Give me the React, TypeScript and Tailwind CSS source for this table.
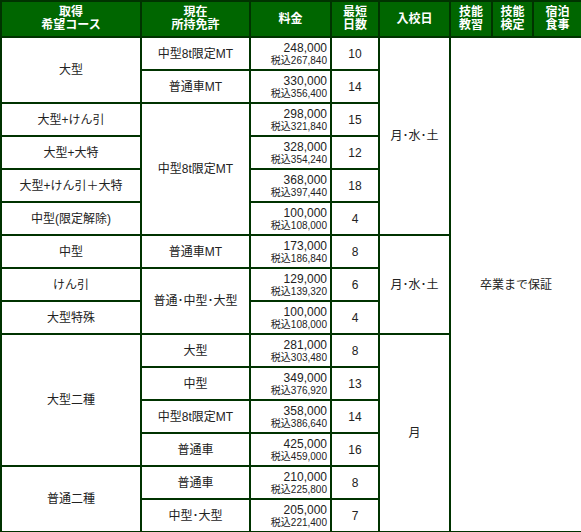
const font = { fontFamily: '"Liberation Sans", "Noto Sans CJK JP", sans-serif' };

type Row = {
  course?: { label: string; span: number };
  license?: { label: string; span: number };
  price: string;
  tax: string;
  days: string;
  entry?: { label: string; span: number };
};

const rows: Row[] = [
  { course: { label: "大型", span: 2 }, license: { label: "中型8t限定MT", span: 1 }, price: "248,000", tax: "267,840", days: "10", entry: { label: "月･水･土", span: 6 } },
  { license: { label: "普通車MT", span: 1 }, price: "330,000", tax: "356,400", days: "14" },
  { course: { label: "大型+けん引", span: 1 }, license: { label: "中型8t限定MT", span: 4 }, price: "298,000", tax: "321,840", days: "15" },
  { course: { label: "大型+大特", span: 1 }, price: "328,000", tax: "354,240", days: "12" },
  { course: { label: "大型+けん引＋大特", span: 1 }, price: "368,000", tax: "397,440", days: "18" },
  { course: { label: "中型(限定解除)", span: 1 }, price: "100,000", tax: "108,000", days: "4" },
  { course: { label: "中型", span: 1 }, license: { label: "普通車MT", span: 1 }, price: "173,000", tax: "186,840", days: "8", entry: { label: "月･水･土", span: 3 } },
  { course: { label: "けん引", span: 1 }, license: { label: "普通･中型･大型", span: 2 }, price: "129,000", tax: "139,320", days: "6" },
  { course: { label: "大型特殊", span: 1 }, price: "100,000", tax: "108,000", days: "4" },
  { course: { label: "大型二種", span: 4 }, license: { label: "大型", span: 1 }, price: "281,000", tax: "303,480", days: "8", entry: { label: "月", span: 6 } },
  { license: { label: "中型", span: 1 }, price: "349,000", tax: "376,920", days: "13" },
  { license: { label: "中型8t限定MT", span: 1 }, price: "358,000", tax: "386,640", days: "14" },
  { license: { label: "普通車", span: 1 }, price: "425,000", tax: "459,000", days: "16" },
  { course: { label: "普通二種", span: 2 }, license: { label: "普通車", span: 1 }, price: "210,000", tax: "225,800", days: "8" },
  { license: { label: "中型･大型", span: 1 }, price: "205,000", tax: "221,400", days: "7" },
];

const cell = "border-2 border-[#003300] text-center align-middle p-0";
const head = "border-2 border-[#003300] bg-[#006600] text-white font-bold text-[12px] leading-[13px] text-center align-middle p-0";

export default function App() {
  return (
    <div className="w-[581px] bg-white" style={font}>
      <table className="w-[581px] table-fixed border-collapse text-[12px] text-[#222]">
        <colgroup>
          <col className="w-[140px]" />
          <col className="w-[109px]" />
          <col className="w-[81px]" />
          <col className="w-[48px]" />
          <col className="w-[71px]" />
          <col className="w-[42px]" />
          <col className="w-[41px]" />
          <col className="w-[49px]" />
        </colgroup>
        <thead>
          <tr className="h-[36px]">
            <th className={head}>取得<br />希望コース</th>
            <th className={head}>現在<br />所持免許</th>
            <th className={head}>料金</th>
            <th className={head}>最短<br />日数</th>
            <th className={head}>入校日</th>
            <th className={head}>技能<br />教習</th>
            <th className={head}>技能<br />検定</th>
            <th className={head}>宿泊<br />食事</th>
          </tr>
        </thead>
        <tbody>
          {rows.map((r, i) => (
            <tr key={i} className="h-[33px]">
              {r.course && (
                <td rowSpan={r.course.span} className={cell}>{r.course.label}</td>
              )}
              {r.license && (
                <td rowSpan={r.license.span} className={cell}>{r.license.label}</td>
              )}
              <td className={`${cell} text-right pr-[3px]`}>
                <div className="leading-[14px]">{r.price}</div>
                <div className="text-[10px] leading-[12px]">税込{r.tax}</div>
              </td>
              <td className={cell}>{r.days}</td>
              {r.entry && (
                <td rowSpan={r.entry.span} className={cell}>{r.entry.label}</td>
              )}
              {i === 0 && (
                <td rowSpan={15} colSpan={3} className={cell}>卒業まで保証</td>
              )}
            </tr>
          ))}
        </tbody>
      </table>
    </div>
  );
}
